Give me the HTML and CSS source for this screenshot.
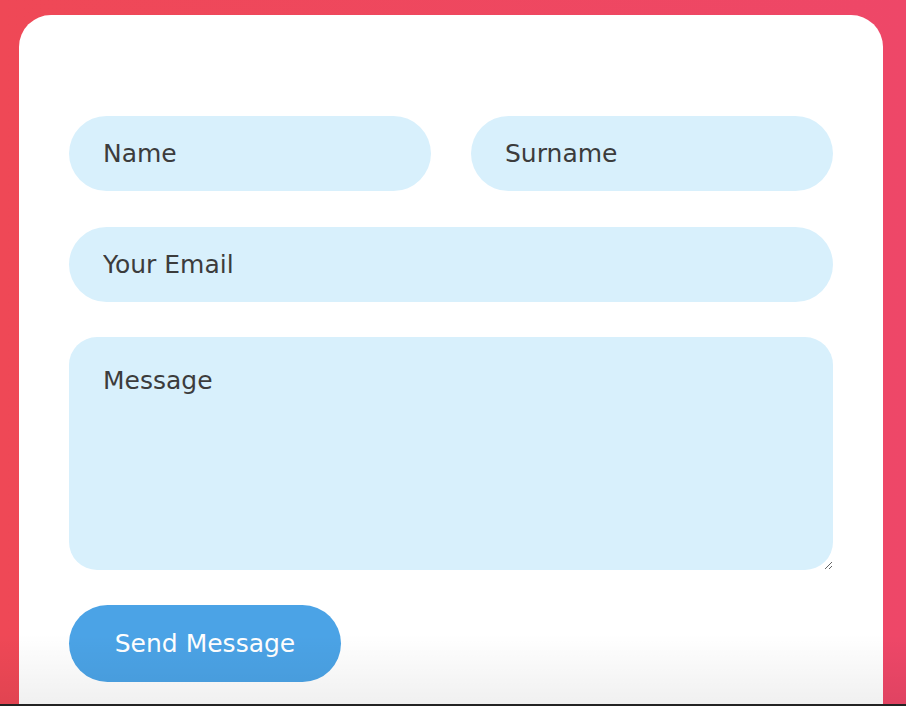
FILE: index.html
```html
<!DOCTYPE html>
<html>
<head>
<meta charset="utf-8">
<link rel="stylesheet" href="styles.css">
</head>
<body>
<div class="page">
  <div class="stage">
    <div class="card">
      <form class="form">
        <div class="row">
          <input class="field" type="text" placeholder="Name">
          <input class="field" type="text" placeholder="Surname">
        </div>
        <input class="field" type="email" placeholder="Your Email">
        <textarea class="field area" placeholder="Message"></textarea>
        <button class="send" type="button">Send Message</button>
      </form>
    </div>
  </div>
  <div class="bar"></div>
</div>
</body>
</html>
```

FILE: styles.css
```css
html, body {
  margin: 0;
  padding: 0;
}
body {
  width: 906px;
  height: 706px;
  overflow: hidden;
  font-family: "DejaVu Sans", "Open Sans", sans-serif;
}
.page {
  height: 706px;
  display: flex;
  flex-direction: column;
}
.stage {
  position: relative;
  flex: 1;
  min-height: 0;
  padding: 15px 23px 0 19px;
  background: linear-gradient(to right, #ef4856, #ee4768);
  overflow: hidden;
}
.stage::after {
  content: "";
  position: absolute;
  left: 0;
  right: 0;
  bottom: 0;
  height: 70px;
  background: linear-gradient(to bottom, rgba(0,0,0,0), rgba(0,0,0,0.06));
  pointer-events: none;
}
.card {
  background: #fff;
  border-radius: 32px 32px 0 0;
  height: 720px;
  padding: 101px 50px 0 50px;
  box-sizing: border-box;
}
.form {
  display: flex;
  flex-direction: column;
  gap: 35px;
  align-items: flex-start;
}
.row {
  display: flex;
  gap: 40px;
  width: 764px;
  margin-bottom: 1px;
}
.field {
  width: 764px;
  height: 75px;
  box-sizing: border-box;
  border: none;
  outline: none;
  background: #d8f0fc;
  border-radius: 38px;
  padding: 0 34px;
  font-family: inherit;
  font-size: 25px;
  color: #333;
  margin: 0;
}
.row .field {
  width: 362px;
  flex: none;
}
.field::placeholder {
  color: #3c3c3c;
  opacity: 1;
}
.area {
  height: 233px;
  border-radius: 28px;
  padding: 29px 34px 20px;
  resize: vertical;
  line-height: 30px;
  display: block;
}
.send {
  width: 272px;
  height: 77px;
  border: none;
  border-radius: 39px;
  background: #4ba3e6;
  color: #fff;
  font-family: inherit;
  font-size: 25px;
  padding: 0;
  cursor: pointer;
}
.bar {
  height: 2px;
  background: #232323;
}
```
